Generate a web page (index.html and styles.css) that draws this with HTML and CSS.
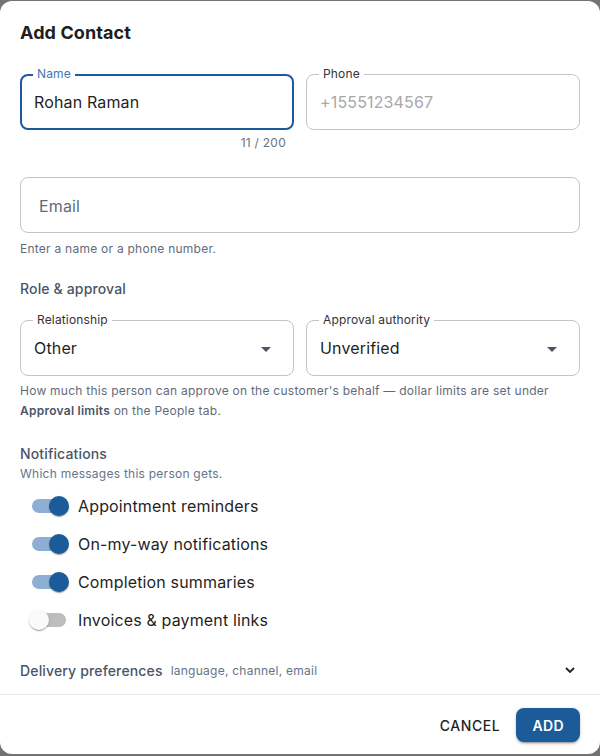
FILE: index.html
```html
<!DOCTYPE html>
<html lang="en">
<head>
    <meta charset="UTF-8">
    <meta name="viewport" content="width=device-width, initial-scale=1.0">
    <title>Add Contact</title>
    <link rel="stylesheet" href="styles.css">
</head>
<body>

    <div class="dialog">
        <h2 class="dialog-title">Add Contact</h2>

        <div class="dialog-content">
            <!-- Name / Phone -->
            <div class="field-row">
                <div class="field-col">
                    <div class="field field-focused">
                        <span class="field-label">Name</span>
                        <span class="field-value">Rohan Raman</span>
                    </div>
                    <div class="field-counter">11 / 200</div>
                </div>
                <div class="field-col">
                    <div class="field">
                        <span class="field-label">Phone</span>
                        <span class="field-placeholder">+15551234567</span>
                    </div>
                </div>
            </div>

            <!-- Email -->
            <div class="field field-email">
                <span class="field-hint">Email</span>
            </div>
            <p class="helper">Enter a name or a phone number.</p>

            <!-- Role & approval -->
            <h3 class="section-title">Role &amp; approval</h3>
            <div class="field-row">
                <div class="field field-select">
                    <span class="field-label">Relationship</span>
                    <span class="field-value">Other</span>
                    <svg class="caret" width="10" height="5" viewBox="0 0 10 5"><path d="M0 0l5 5 5-5z"/></svg>
                </div>
                <div class="field field-select">
                    <span class="field-label">Approval authority</span>
                    <span class="field-value">Unverified</span>
                    <svg class="caret" width="10" height="5" viewBox="0 0 10 5"><path d="M0 0l5 5 5-5z"/></svg>
                </div>
            </div>
            <p class="helper helper-long">How much this person can approve on the customer's behalf — dollar limits are set under <b>Approval limits</b> on the People tab.</p>

            <!-- Notifications -->
            <h3 class="section-title section-notify">Notifications</h3>
            <p class="section-sub">Which messages this person gets.</p>

            <div class="switch-list">
                <label class="switch-row">
                    <span class="switch on"><span class="track"></span><span class="thumb"></span></span>
                    Appointment reminders
                </label>
                <label class="switch-row">
                    <span class="switch on"><span class="track"></span><span class="thumb"></span></span>
                    On-my-way notifications
                </label>
                <label class="switch-row">
                    <span class="switch on"><span class="track"></span><span class="thumb"></span></span>
                    Completion summaries
                </label>
                <label class="switch-row">
                    <span class="switch"><span class="track"></span><span class="thumb"></span></span>
                    Invoices &amp; payment links
                </label>
            </div>

            <!-- Delivery preferences (collapsed) -->
            <div class="accordion">
                <span class="accordion-title">Delivery preferences</span>
                <span class="accordion-sub">language, channel, email</span>
                <svg class="chevron" width="12" height="8" viewBox="0 0 12 8"><path d="M2 2l4 4 4-4" fill="none" stroke="#1f1f1f" stroke-width="1.8"/></svg>
            </div>
        </div>

        <div class="dialog-actions">
            <button class="btn-text">Cancel</button>
            <button class="btn-primary">Add</button>
        </div>
    </div>

</body>
</html>
```

FILE: styles.css
```css
/* Reset and page backdrop */
* {
    margin: 0;
    padding: 0;
    box-sizing: border-box;
}
body {
    font-family: 'Inter', 'Roboto', sans-serif;
    background-color: #737373;
    color: #1f1f1f;
    height: 756px;
    overflow: hidden;
    letter-spacing: 0.15px;
}

/* Dialog shell */
.dialog {
    margin-top: 1px;
    height: 753px;
    background-color: #ffffff;
    border-radius: 12px;
    display: flex;
    flex-direction: column;
}
.dialog-title {
    font-size: 18px;
    font-weight: 700;
    line-height: 24px;
    letter-spacing: 0.1px;
    padding: 20px 20px 0;
    color: #1e1e1e;
}
.dialog-content {
    flex: 1;
    padding: 29px 20px 0;
    display: flex;
    flex-direction: column;
}

/* Outlined text fields */
.field-row {
    display: flex;
    gap: 12px;
}
.field-col {
    flex: 1;
    display: flex;
    flex-direction: column;
}
.field {
    position: relative;
    height: 56px;
    border: 1px solid #c4c4c4;
    border-radius: 8px;
    display: flex;
    align-items: center;
    padding: 0 13px;
    font-size: 16px;
}
.field-row > .field {
    flex: 1;
}
.field-focused {
    border: 2px solid #1b5b99;
    padding: 0 12px;
}
.field-label {
    position: absolute;
    top: -9px;
    left: 12px;
    padding: 0 4px;
    background-color: #ffffff;
    font-size: 12px;
    line-height: 16px;
    color: #333333;
}
.field-focused .field-label {
    top: -10px;
    left: 11px;
    color: #3f77b4;
}
.field-value {
    color: #1f1f1f;
}
.field-placeholder {
    color: #a8a8a8;
}
.field-counter {
    text-align: right;
    font-size: 12px;
    line-height: 16px;
    letter-spacing: 0.25px;
    color: #6b7280;
    margin-top: 5px;
    padding-right: 8px;
}
.field-email {
    margin-top: 26px;
    padding: 0 18px;
}
.field-hint {
    color: #5f6b7b;
    padding-top: 2px;
}
.field-select .caret {
    position: absolute;
    right: 22px;
    top: 26px;
    fill: #4b5563;
}

/* Helper text and section headings */
.helper {
    font-size: 12px;
    line-height: 16px;
    letter-spacing: 0.25px;
    color: #5f6b7b;
    margin-top: 8px;
}
.helper-long {
    line-height: 20px;
    margin-top: 5px;
}
.helper b {
    font-weight: 600;
    color: #4a5565;
}
.section-title {
    font-size: 14px;
    font-weight: 500;
    line-height: 20px;
    color: #4a5568;
    margin: 22px 0 21px;
}
.section-notify {
    margin: 23px 0 0;
}
.section-sub {
    font-size: 12px;
    line-height: 20px;
    letter-spacing: 0.25px;
    color: #64748b;
}

/* Switch rows */
.switch-list {
    margin-top: 3px;
    display: flex;
    flex-direction: column;
}
.switch-row {
    display: flex;
    align-items: center;
    height: 38px;
    font-size: 16px;
    color: #1f1f1f;
}
.switch {
    position: relative;
    width: 58px;
    height: 38px;
    padding: 12px;
    flex-shrink: 0;
}
.switch .track {
    display: block;
    width: 34px;
    height: 14px;
    border-radius: 7px;
    background-color: #bdbdbd;
}
.switch .thumb {
    position: absolute;
    top: 9px;
    left: 9px;
    width: 20px;
    height: 20px;
    border-radius: 50%;
    background-color: #fafafa;
    box-shadow: 0 2px 1px -1px rgba(0, 0, 0, 0.2), 0 1px 1px rgba(0, 0, 0, 0.14), 0 1px 3px rgba(0, 0, 0, 0.12);
}
.switch.on .track {
    background-color: #8eaed3;
}
.switch.on .thumb {
    left: 29px;
    background-color: #1b5b99;
}

/* Collapsed delivery section */
.accordion {
    margin-top: 8px;
    height: 46px;
    display: flex;
    align-items: center;
    gap: 8px;
}
.accordion-title {
    font-size: 14px;
    font-weight: 500;
    color: #4a5568;
}
.accordion-sub {
    font-size: 12px;
    letter-spacing: 0.25px;
    color: #64748b;
    flex: 1;
}
.chevron {
    margin-right: 4px;
}

/* Footer buttons */
.dialog-actions {
    border-top: 1px solid #e5e7eb;
    display: flex;
    justify-content: flex-end;
    align-items: center;
    gap: 8px;
    padding: 13px 20px 12px;
}
.dialog-actions button {
    font-family: inherit;
    font-size: 14px;
    font-weight: 500;
    text-transform: uppercase;
    letter-spacing: 0.6px;
    border: none;
    cursor: pointer;
    height: 34px;
}
.btn-text {
    background: none;
    color: #1f1f1f;
    padding: 0 8px;
}
.btn-primary {
    background-color: #1b5b99;
    color: #ffffff;
    font-weight: 600 !important;
    letter-spacing: 0.4px !important;
    padding: 0 16px;
    border-radius: 8px;
    box-shadow: 0 3px 1px -2px rgba(0, 0, 0, 0.2), 0 2px 2px rgba(0, 0, 0, 0.14), 0 1px 5px rgba(0, 0, 0, 0.12);
}
```
